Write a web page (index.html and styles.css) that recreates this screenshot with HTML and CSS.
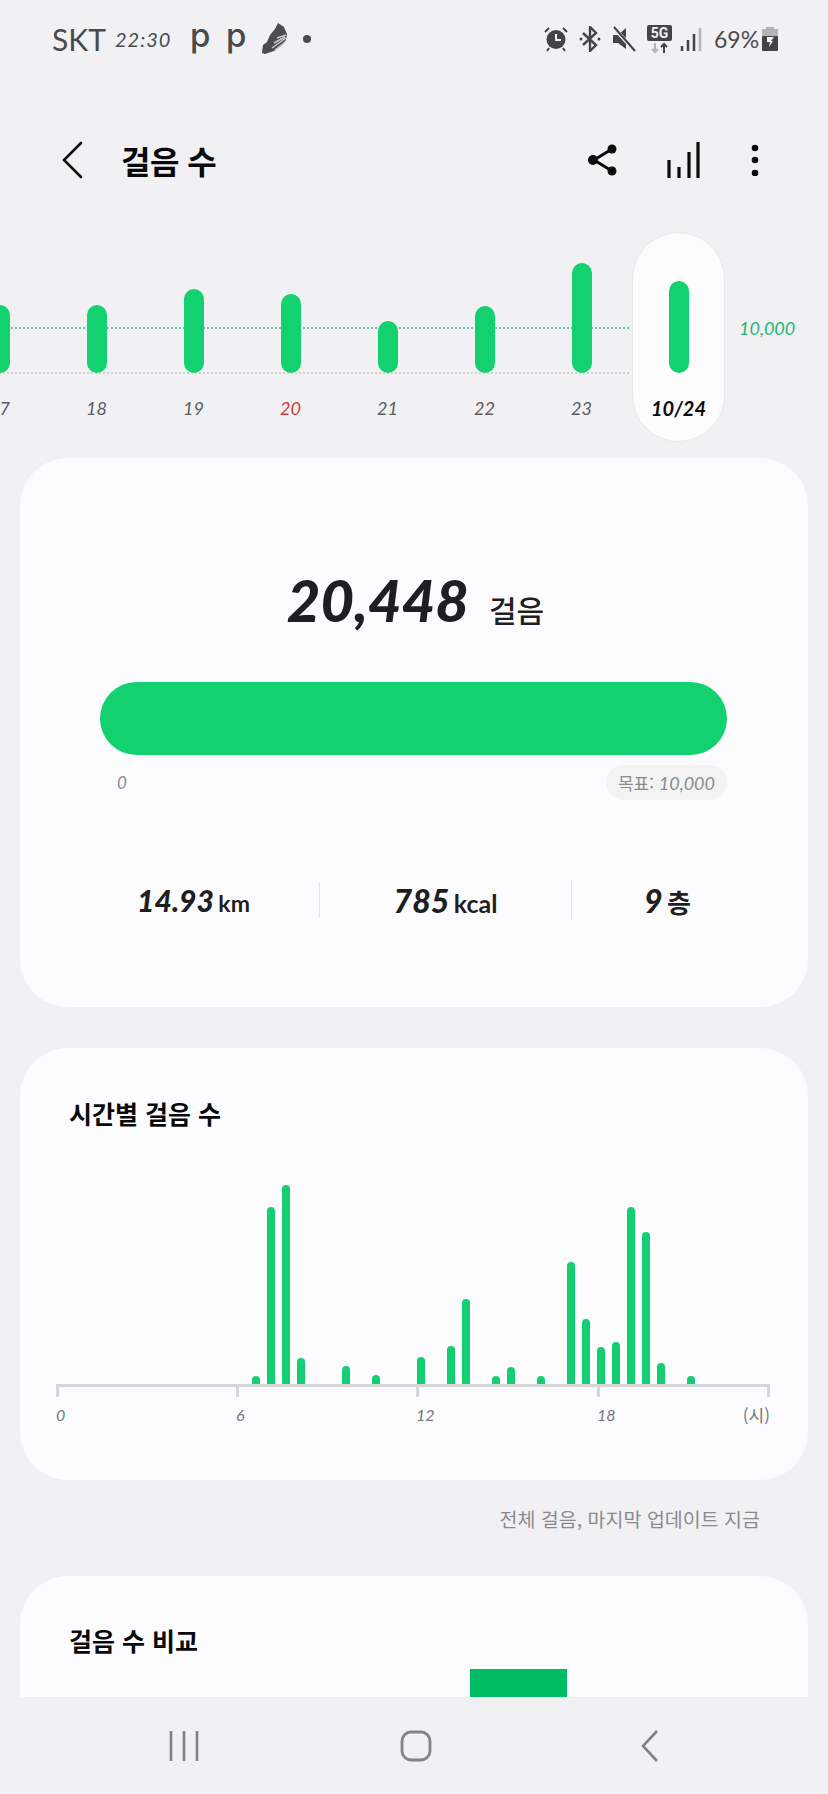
FILE: index.html
```html
<!DOCTYPE html>
<html lang="ko">
<head>
<meta charset="utf-8">
<title>걸음 수</title>
<link rel="stylesheet" href="styles.css">
</head>
<body>
<div class="phone">

<div class="scroll">

<div class="status">
  <div class="status-left">
    <span class="carrier">SKT</span>
    <span class="clock">22:30</span>
    <span class="app-p">p</span>
    <span class="app-p">p</span>
    <svg class="shoe" width="26" height="32" viewBox="0 0 26 32">
      <path d="M16 0l6 4 3 7-1 6-5 6-7 5-9 3-3-1 1-8 4-3 3-7 5-6z" fill="#4c4c4e"/>
      <path d="M10 25l14-10M13 27l9-7M15 15l9-3M12 20l11-6" stroke="#c9c9cb" stroke-width="1.500" fill="none"/>
    </svg>
    <span class="dot"></span>
  </div>
  <div class="status-right">
    <svg width="24" height="26" viewBox="0 0 24 26">
      <circle cx="12" cy="13.500" r="9.500" fill="#444446"/>
      <path d="M12 8v6h5" stroke="#f1f1f3" stroke-width="2" fill="none"/>
      <path d="M1 6l4-4M23 6l-4-4M5 22l-2 3M19 22l2 3" stroke="#444446" stroke-width="2" fill="none"/>
    </svg>
    <svg class="bt" width="22" height="26" viewBox="0 0 22 26">
      <path d="M4 7l13 12-6 6V1l6 6L4 19" stroke="#444446" stroke-width="2.400" fill="none"/>
      <circle cx="2" cy="13" r="1.500" fill="#444446"/>
      <circle cx="20" cy="13" r="1.500" fill="#444446"/>
    </svg>
    <svg class="mute" width="24" height="26" viewBox="0 0 24 26">
      <path d="M1 9h5l8-7v21l-8-6H1z" fill="#444446"/>
      <path d="M2 2l21 23" stroke="#f1f1f3" stroke-width="4"/>
      <path d="M2 1l21 24" stroke="#444446" stroke-width="2"/>
    </svg>
    <svg class="net" width="25" height="28" viewBox="0 0 25 28">
      <rect x="0" y="0" width="25" height="16" rx="2" fill="#444446"/>
      <text x="12.500" y="13" class="net-text">5G</text>
      <path d="M8 18v9M5 24l3 3 3-3" stroke="#b4b4b6" stroke-width="2" fill="none"/>
      <path d="M17 28v-9M14 22l3-3 3 3" stroke="#444446" stroke-width="2" fill="none"/>
    </svg>
    <svg class="signal" width="22" height="24" viewBox="0 0 22 24">
      <path d="M2 19v5M8 13v11M14 7v17" stroke="#444446" stroke-width="2.500"/>
      <path d="M20 1v23" stroke="#b4b4b6" stroke-width="2.500"/>
    </svg>
    <span class="batt-text">69%</span>
    <svg class="batt" width="16" height="24" viewBox="0 0 16 24">
      <rect x="4" y="0" width="8" height="3" fill="#b4b4b6"/>
      <rect x="0" y="2" width="16" height="8" fill="#b4b4b6"/>
      <rect x="0" y="9" width="16" height="15" rx="1" fill="#444446"/>
      <path d="M5 10h7l-3 4h2l-4 6 1-5H5z" fill="#f1f1f3"/>
    </svg>
  </div>
</div>

<div class="toolbar">
  <svg class="back" width="22" height="38" viewBox="0 0 22 38">
    <path d="M20 2L3 19l17 17" stroke="#111" stroke-width="2.600" fill="none" stroke-linecap="round"/>
  </svg>
  <div class="page-title">걸음 수</div>
  <svg class="tool-share" width="32" height="34" viewBox="0 0 32 34">
    <path d="M25 6L7 17l18 11" stroke="#0a0a0a" stroke-width="3" fill="none"/>
    <circle cx="25" cy="6" r="4.500" fill="#0a0a0a"/>
    <circle cx="6" cy="17" r="5" fill="#0a0a0a"/>
    <circle cx="25" cy="28" r="4.500" fill="#0a0a0a"/>
  </svg>
  <svg class="tool-bars" width="34" height="36" viewBox="0 0 34 36">
    <path d="M3 18v18M13 25v11M23 10v26M32 0v36" stroke="#0a0a0a" stroke-width="3.200"/>
  </svg>
  <svg class="tool-more" width="10" height="32" viewBox="0 0 10 32">
    <circle cx="5" cy="4" r="3.300" fill="#0a0a0a"/>
    <circle cx="5" cy="16" r="3.300" fill="#0a0a0a"/>
    <circle cx="5" cy="29" r="3.300" fill="#0a0a0a"/>
  </svg>
</div>

<div class="trend">
  <div class="trend-plot">
    <div class="goal-line"></div>
    <div class="base-line"></div>
    <div class="today-pill"></div>
    <div class="day"><div class="day-bar" style="height:68px"></div><div class="day-label">17</div></div>
    <div class="day"><div class="day-bar" style="height:68px"></div><div class="day-label">18</div></div>
    <div class="day"><div class="day-bar" style="height:84px"></div><div class="day-label">19</div></div>
    <div class="day"><div class="day-bar" style="height:79px"></div><div class="day-label sunday">20</div></div>
    <div class="day"><div class="day-bar" style="height:52px"></div><div class="day-label">21</div></div>
    <div class="day"><div class="day-bar" style="height:67px"></div><div class="day-label">22</div></div>
    <div class="day"><div class="day-bar" style="height:110px"></div><div class="day-label">23</div></div>
    <div class="day"><div class="day-bar" style="height:92px"></div><div class="day-label today">10/24</div></div>
    <div class="goal-value">10,000</div>
  </div>
</div>

<div class="card card-total">
  <div class="total"><span class="total-num">20,448</span><span class="total-unit">걸음</span></div>
  <div class="progress"></div>
  <div class="progress-foot">
    <span class="progress-zero">0</span>
    <span class="goal-chip">목표: <i>10,000</i></span>
  </div>
  <div class="stats">
    <div class="stat stat-km"><b>14.93</b> <span>km</span></div>
    <div class="stat stat-kcal"><b>785</b> <span>kcal</span></div>
    <div class="stat stat-floor"><b>9</b> <span>층</span></div>
  </div>
</div>

<div class="card card-hours">
  <div class="card-title">시간별 걸음 수</div>
  <div class="hours">
    <div class="hour" style="height:8px"></div>
    <div class="hour" style="height:177px"></div>
    <div class="hour" style="height:199px"></div>
    <div class="hour" style="height:26px"></div>
    <div class="hour empty"></div>
    <div class="hour empty"></div>
    <div class="hour" style="height:18px"></div>
    <div class="hour empty"></div>
    <div class="hour" style="height:9px"></div>
    <div class="hour empty"></div>
    <div class="hour empty"></div>
    <div class="hour" style="height:27px"></div>
    <div class="hour empty"></div>
    <div class="hour" style="height:38px"></div>
    <div class="hour" style="height:85px"></div>
    <div class="hour empty"></div>
    <div class="hour" style="height:8px"></div>
    <div class="hour" style="height:17px"></div>
    <div class="hour empty"></div>
    <div class="hour" style="height:8px"></div>
    <div class="hour empty"></div>
    <div class="hour" style="height:122px"></div>
    <div class="hour" style="height:65px"></div>
    <div class="hour" style="height:37px"></div>
    <div class="hour" style="height:42px"></div>
    <div class="hour" style="height:177px"></div>
    <div class="hour" style="height:152px"></div>
    <div class="hour" style="height:21px"></div>
    <div class="hour empty"></div>
    <div class="hour" style="height:8px"></div>
  </div>
  <div class="axis">
    <div class="axis-seg"></div>
    <div class="axis-seg"></div>
    <div class="axis-seg"></div>
    <div class="axis-seg axis-end"></div>
  </div>
  <div class="axis-labels">
    <span>0</span>
    <span>6</span>
    <span>12</span>
    <span class="axis-last"><span>18</span><span class="axis-unit">(시)</span></span>
  </div>
</div>

<div class="footnote">전체 걸음, 마지막 업데이트 지금</div>

<div class="card card-compare">
  <div class="card-title">걸음 수 비교</div>
  <div class="compare-row">
    <span class="compare-range">10/18-10/24</span>
    <div class="compare-bar"></div>
  </div>
</div>

</div>

<div class="navbar">
  <svg width="30" height="32" viewBox="0 0 30 32">
    <path d="M2 1v30M15 1v30M28 1v30" stroke="#828284" stroke-width="2.600"/>
  </svg>
  <svg width="32" height="32" viewBox="0 0 32 32">
    <rect x="2" y="2" width="28" height="28" rx="9" stroke="#828284" stroke-width="2.800" fill="none"/>
  </svg>
  <svg class="nav-back" width="20" height="34" viewBox="0 0 20 34">
    <path d="M17 2L3 17l14 15" stroke="#828284" stroke-width="2.600" fill="none"/>
  </svg>
</div>

</div>
</body>
</html>
```

FILE: styles.css
```css
* { box-sizing: border-box; }
html, body { margin: 0; padding: 0; }
body {
  background: #f1f1f3;
  color: #1c1c1e;
  font-family: "Noto Sans CJK KR", "Noto Sans", sans-serif;
}
.phone { width: 828px; height: 1794px; overflow: hidden; display: flex; flex-direction: column; }
.scroll { height: 1697px; overflow: hidden; flex: none; }

/* status bar */
.status { height: 78px; display: flex; justify-content: space-between; align-items: center; padding: 0 50px 0 52px; }
.status-left, .status-right { display: flex; align-items: center; }
.status-right svg { display: block; }
.carrier { font-family: "Lato", sans-serif; font-size: 30px; color: #4a4a4c; width: 63px; }
.clock { font-family: "Lato", sans-serif; font-size: 20px; font-style: italic; color: #4a4a4c; width: 75px; letter-spacing: 1px; }
.app-p { font-family: "Inter", sans-serif; font-weight: 500; font-size: 33px; line-height: 34px; color: #4a4a4c; width: 36px; padding-bottom: 8px; }
.dot { width: 8px; height: 8px; border-radius: 50%; background: #4a4a4c; margin-left: 15px; }
.bt { margin-left: 11px; }
.mute { margin-left: 11px; }
.net { margin-left: 11px; }
.net-text { font-family: "Roboto", sans-serif; font-size: 14px; font-weight: 700; fill: #f1f1f3; text-anchor: middle; }
.signal { margin-left: 8px; }
.batt-text { font-family: "Lato", sans-serif; font-size: 23px; color: #4a4a4c; margin-left: 12px; width: 48px; }

/* toolbar */
.toolbar { height: 90px; margin-top: 37px; padding: 0 0 0 61px; display: flex; align-items: center; }
.page-title { font-size: 32px; font-weight: 700; color: #0a0a0a; margin-left: 38px; flex: 1; letter-spacing: -0.5px; }
.tool-share { margin-right: 47px; }
.tool-bars { margin-right: 50px; }
.tool-more { margin-right: 68px; }

/* week trend */
.trend { height: 237px; padding-top: 27px; }
.trend-plot { position: relative; display: flex; height: 210px; margin-left: -49px; }
.day { width: 97px; height: 210px; display: flex; flex-direction: column; align-items: center; position: relative; }
.day-bar { width: 20px; border-radius: 10px; background: #13d16f; position: absolute; bottom: 69px; }
.day-label { position: absolute; top: 162px; font-family: "Lato", sans-serif; font-style: italic; font-size: 18px; line-height: 28px; color: #5c5c5e; }
.day-label.sunday { color: #cf3b3b; }
.day-label.today { color: #0a0a0a; font-size: 20px; font-weight: 700; }
.goal-line { position: absolute; left: 49px; width: 629px; top: 95px; border-top: 2px dotted #6fbfa3; }
.base-line { position: absolute; left: 49px; width: 629px; top: 140px; border-top: 2px dotted #cfd0d2; }
.today-pill { position: absolute; left: 681px; top: 0; width: 93px; height: 210px; border-radius: 47px; background: #fcfcfd; border: 1px solid #e8e8ea; }
.goal-value { position: absolute; left: 788px; top: 82px; font-family: "Lato", sans-serif; font-style: italic; font-size: 18px; line-height: 28px; color: #25b67c; }

/* cards */
.card { margin: 0 20px; background: #fcfcfe; border-radius: 48px; }
.card-total { height: 549px; padding-top: 112px; margin-top: 16px; }
.total { display: flex; justify-content: center; align-items: baseline; padding-left: 3px; height: 60px; }
.total-num { font-family: "Lato", sans-serif; font-size: 58px; line-height: 60px; font-weight: 900; color: #1f1f21; font-style: italic; }
.total-unit { font-size: 30px; line-height: 60px; margin-left: 20px; font-weight: 500; color: #1f1f21; }
.progress { height: 73px; margin: 52px 81px 0 80px; border-radius: 37px; background: #13d16f; }
.progress-foot { display: flex; justify-content: space-between; align-items: center; margin: 10px 81px 0 97px; height: 35px; }
.progress-zero { font-family: "Lato", sans-serif; font-style: italic; font-size: 17px; color: #8b8b8d; }
.goal-chip { height: 35px; line-height: 35px; border-radius: 18px; background: #f3f3f3; padding: 0 12px; font-size: 17px; color: #8b8b8d; }
.goal-chip i { font-family: "Lato", sans-serif; font-size: 18px; }
.stats { display: flex; margin: 82px 80px 0 80px; height: 36px; align-items: center; }
.stat { text-align: center; color: #1f1f21; font-weight: 700; white-space: nowrap; }
.stat b { font-family: "Lato", sans-serif; font-style: italic; font-size: 30px; font-weight: 900; }
.stat span { font-family: "Lato", sans-serif; font-size: 23px; font-weight: 700; }
.stat-km { width: 220px; padding-right: 32px; border-right: 1px solid #e4e4e6; }
.stat-kcal { width: 252px; border-right: 1px solid #e4e4e6; }
.stat-kcal b { font-size: 32px; }
.stat-kcal span { font-size: 25px; }
.stat-floor { flex: 1; padding-left: 35px; }
.stat-floor b { font-size: 32px; }
.stat-floor span { font-family: "Noto Sans CJK KR", sans-serif; font-size: 26px; }

.card-hours { height: 432px; margin-top: 41px; padding: 43px 0 0 36px; }
.card-title { font-size: 25px; line-height: 44px; font-weight: 700; color: #0a0a0a; margin-left: 13px; }
.hours { display: flex; gap: 7px; align-items: flex-end; height: 206px; margin-top: 43px; margin-left: 196px; }
.hour { flex: 0 0 8px; width: 8px; background: #13cf72; border-radius: 4px 4px 0 0; }
.hour.empty { background: none; }
.axis { display: grid; grid-template-columns: 180px 180px 181px 173px; height: 13px; }
.axis-seg { border-top: 3px solid #d5d6da; border-left: 3px solid #d5d6da; }
.axis-end { border-right: 3px solid #d5d6da; }
.axis-labels { display: grid; grid-template-columns: 180px 180px 181px 173px; margin-top: 4px; font-family: "Lato", sans-serif; font-style: italic; font-size: 16px; line-height: 28px; color: #77777a; }
.axis-last { display: flex; justify-content: space-between; }
.axis-unit { font-family: "Noto Sans CJK KR", sans-serif; font-style: normal; font-size: 17px; }

.footnote { height: 96px; padding: 23px 68px 0 0; text-align: right; font-size: 19.5px; line-height: 32px; color: #8a8a8c; }

.card-compare { height: 200px; padding: 42px 0 0 49px; border-radius: 48px 48px 0 0; }
.card-compare .card-title { margin-left: 0; }
.compare-row { position: relative; margin-top: 4px; }
.compare-range { position: absolute; left: 48px; top: 27px; font-family: "Lato", sans-serif; font-size: 20px; font-weight: 700; color: #1f1f21; }
.compare-bar { position: absolute; left: 401px; top: 3px; width: 97px; height: 60px; background: #00bd64; }

/* bottom nav */
.navbar { flex: 1; display: flex; align-items: center; padding: 0 0 0 169px; gap: 201px; }
.nav-back { margin-left: 7px; }
```
